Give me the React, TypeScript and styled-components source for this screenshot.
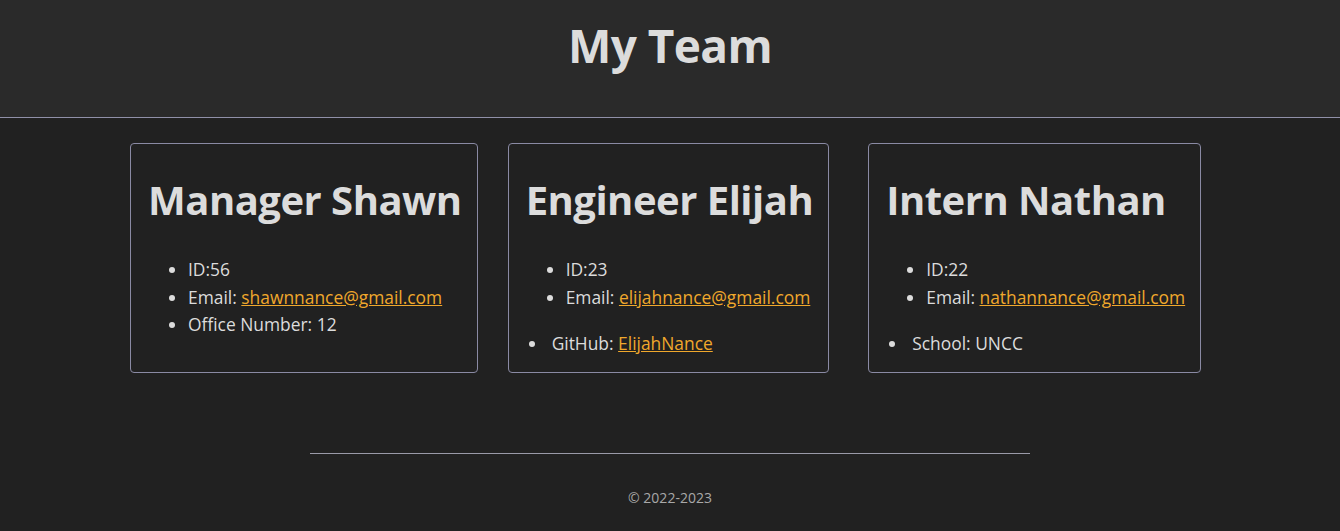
import React from "react";
import styled, { createGlobalStyle } from "styled-components";

const Global = createGlobalStyle`
  html, body { margin: 0; padding: 0; }
  body {
    background: #212121;
    color: #dcdcdc;
    font-family: "Open Sans", "Noto Sans", sans-serif;
  }
`;

const Header = styled.header`
  background: #2a2a2a;
  height: 117px;
  border-bottom: 1px solid #9090a8;
  display: flex;
  justify-content: center;
  align-items: flex-start;
`;

const Title = styled.h1`
  margin: 16px 0 0;
  font-size: 46px;
  font-weight: 700;
  letter-spacing: -0.6px;
  line-height: 1.3;
  color: #dcdcdc;
`;

const Cards = styled.main`
  display: flex;
  justify-content: flex-start;
  align-items: stretch;
  padding: 25px 0 0 130px;
`;

const Card = styled.section<{ $lead: number }>`
  margin-left: ${(p) => p.$lead}px;
  border: 1px solid #8a8aa4;
  border-radius: 4px;
  padding: 0 15px 14px 17px;
`;

const Name = styled.h2`
  margin: 32px 0 32px;
  font-size: 40px;
  font-weight: 700;
  letter-spacing: -0.5px;
  line-height: 1.2;
  color: #dcdcdc;
`;

const List = styled.ul`
  margin: 0 0 19px;
  padding-left: 40px;
`;

const Item = styled.li`
  font-size: 17.4px;
  line-height: 27.5px;
  color: #dcdcdc;
`;

const Extra = styled.li`
  font-size: 17.4px;
  line-height: 27.5px;
  color: #dcdcdc;
  margin-left: 22px;
  padding-left: 4px;
`;

const Link = styled.a`
  color: #f0a82c;
  text-decoration: underline;
`;

const Footer = styled.footer`
  margin: 80px 0 0 310px;
  width: 720px;
  border-top: 1px solid #9a9aa8;
  text-align: center;
  padding-top: 34px;
  font-size: 14px;
  color: #a8a8a8;
`;

type Member = {
  role: string;
  name: string;
  id: number;
  email: string;
  office?: string;
  github?: string;
  school?: string;
  lead: number;
};

const team: Member[] = [
  { role: "Manager", name: "Shawn", id: 56, email: "shawnnance@gmail.com", office: "12", lead: 0 },
  { role: "Engineer", name: "Elijah", id: 23, email: "elijahnance@gmail.com", github: "ElijahNance", lead: 30 },
  { role: "Intern", name: "Nathan", id: 22, email: "nathannance@gmail.com", school: "UNCC", lead: 39 },
];

export default function App() {
  return (
    <>
      <Global />
      <Header>
        <Title>My Team</Title>
      </Header>
      <Cards>
        {team.map((m) => (
          <Card key={m.name} $lead={m.lead}>
            <Name>
              {m.role} {m.name}
            </Name>
            <List>
              <Item>ID:{m.id}</Item>
              <Item>
                Email: <Link href={`mailto:${m.email}`}>{m.email}</Link>
              </Item>
              {m.office && <Item>Office Number: {m.office}</Item>}
            </List>
            {m.github && (
              <Extra>
                GitHub: <Link href={`https://github.com/${m.github}`}>{m.github}</Link>
              </Extra>
            )}
            {m.school && <Extra>School: {m.school}</Extra>}
          </Card>
        ))}
      </Cards>
      <Footer>© 2022-2023</Footer>
    </>
  );
}
